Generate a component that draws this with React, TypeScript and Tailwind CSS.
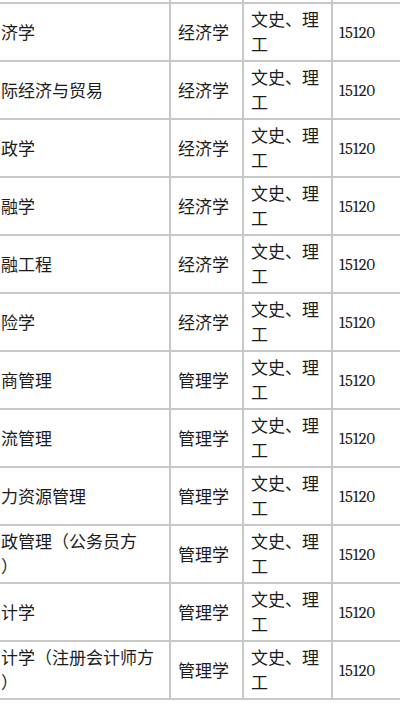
import React from 'react';

type Row = { name: string[]; category: string };

const rows: Row[] = [
  { name: ['济学'], category: '经济学' },
  { name: ['际经济与贸易'], category: '经济学' },
  { name: ['政学'], category: '经济学' },
  { name: ['融学'], category: '经济学' },
  { name: ['融工程'], category: '经济学' },
  { name: ['险学'], category: '经济学' },
  { name: ['商管理'], category: '管理学' },
  { name: ['流管理'], category: '管理学' },
  { name: ['力资源管理'], category: '管理学' },
  { name: ['政管理（公务员方', '）'], category: '管理学' },
  { name: ['计学'], category: '管理学' },
  { name: ['计学（注册会计师方', '）'], category: '管理学' },
];

export default function App() {
  return (
    <div className="w-[400px] h-[703px] overflow-hidden bg-white text-[#1c1c1c] text-[17px] leading-[25px] font-['Noto_Sans_CJK_SC']">
      {/* tail of the row above */}
      <div className="flex h-[2px] border-b-2 border-[#c8c8c8] box-content">
        <div className="w-[171px] shrink-0 border-r-2 border-[#c8c8c8]" />
        <div className="w-[73px] shrink-0 border-r-2 border-[#c8c8c8]" />
        <div className="w-[89px] shrink-0 border-r-2 border-[#c8c8c8]" />
        <div className="flex-1" />
      </div>

      {rows.map((row, i) => (
        <div key={i} className="flex h-[58px] border-b-2 border-[#c8c8c8]">
          <div className="w-[171px] shrink-0 border-r-2 border-[#c8c8c8] pl-[1px] pb-[2px] flex flex-col justify-center">
            {row.name.map((line, j) => (
              <div key={j} className="whitespace-nowrap">{line}</div>
            ))}
          </div>
          <div className="w-[73px] shrink-0 border-r-2 border-[#c8c8c8] pl-[7px] pb-[2px] flex items-center whitespace-nowrap">
            {row.category}
          </div>
          <div className="w-[89px] shrink-0 border-r-2 border-[#c8c8c8] pl-[7px] pb-[2px] flex flex-col justify-center">
            <div className="whitespace-nowrap">文史、理</div>
            <div>工</div>
          </div>
          <div className="flex-1 pl-[6px] flex items-center font-serif [font-family:'Liberation_Serif',serif] text-[16.5px]">15120</div>
        </div>
      ))}
    </div>
  );
}
